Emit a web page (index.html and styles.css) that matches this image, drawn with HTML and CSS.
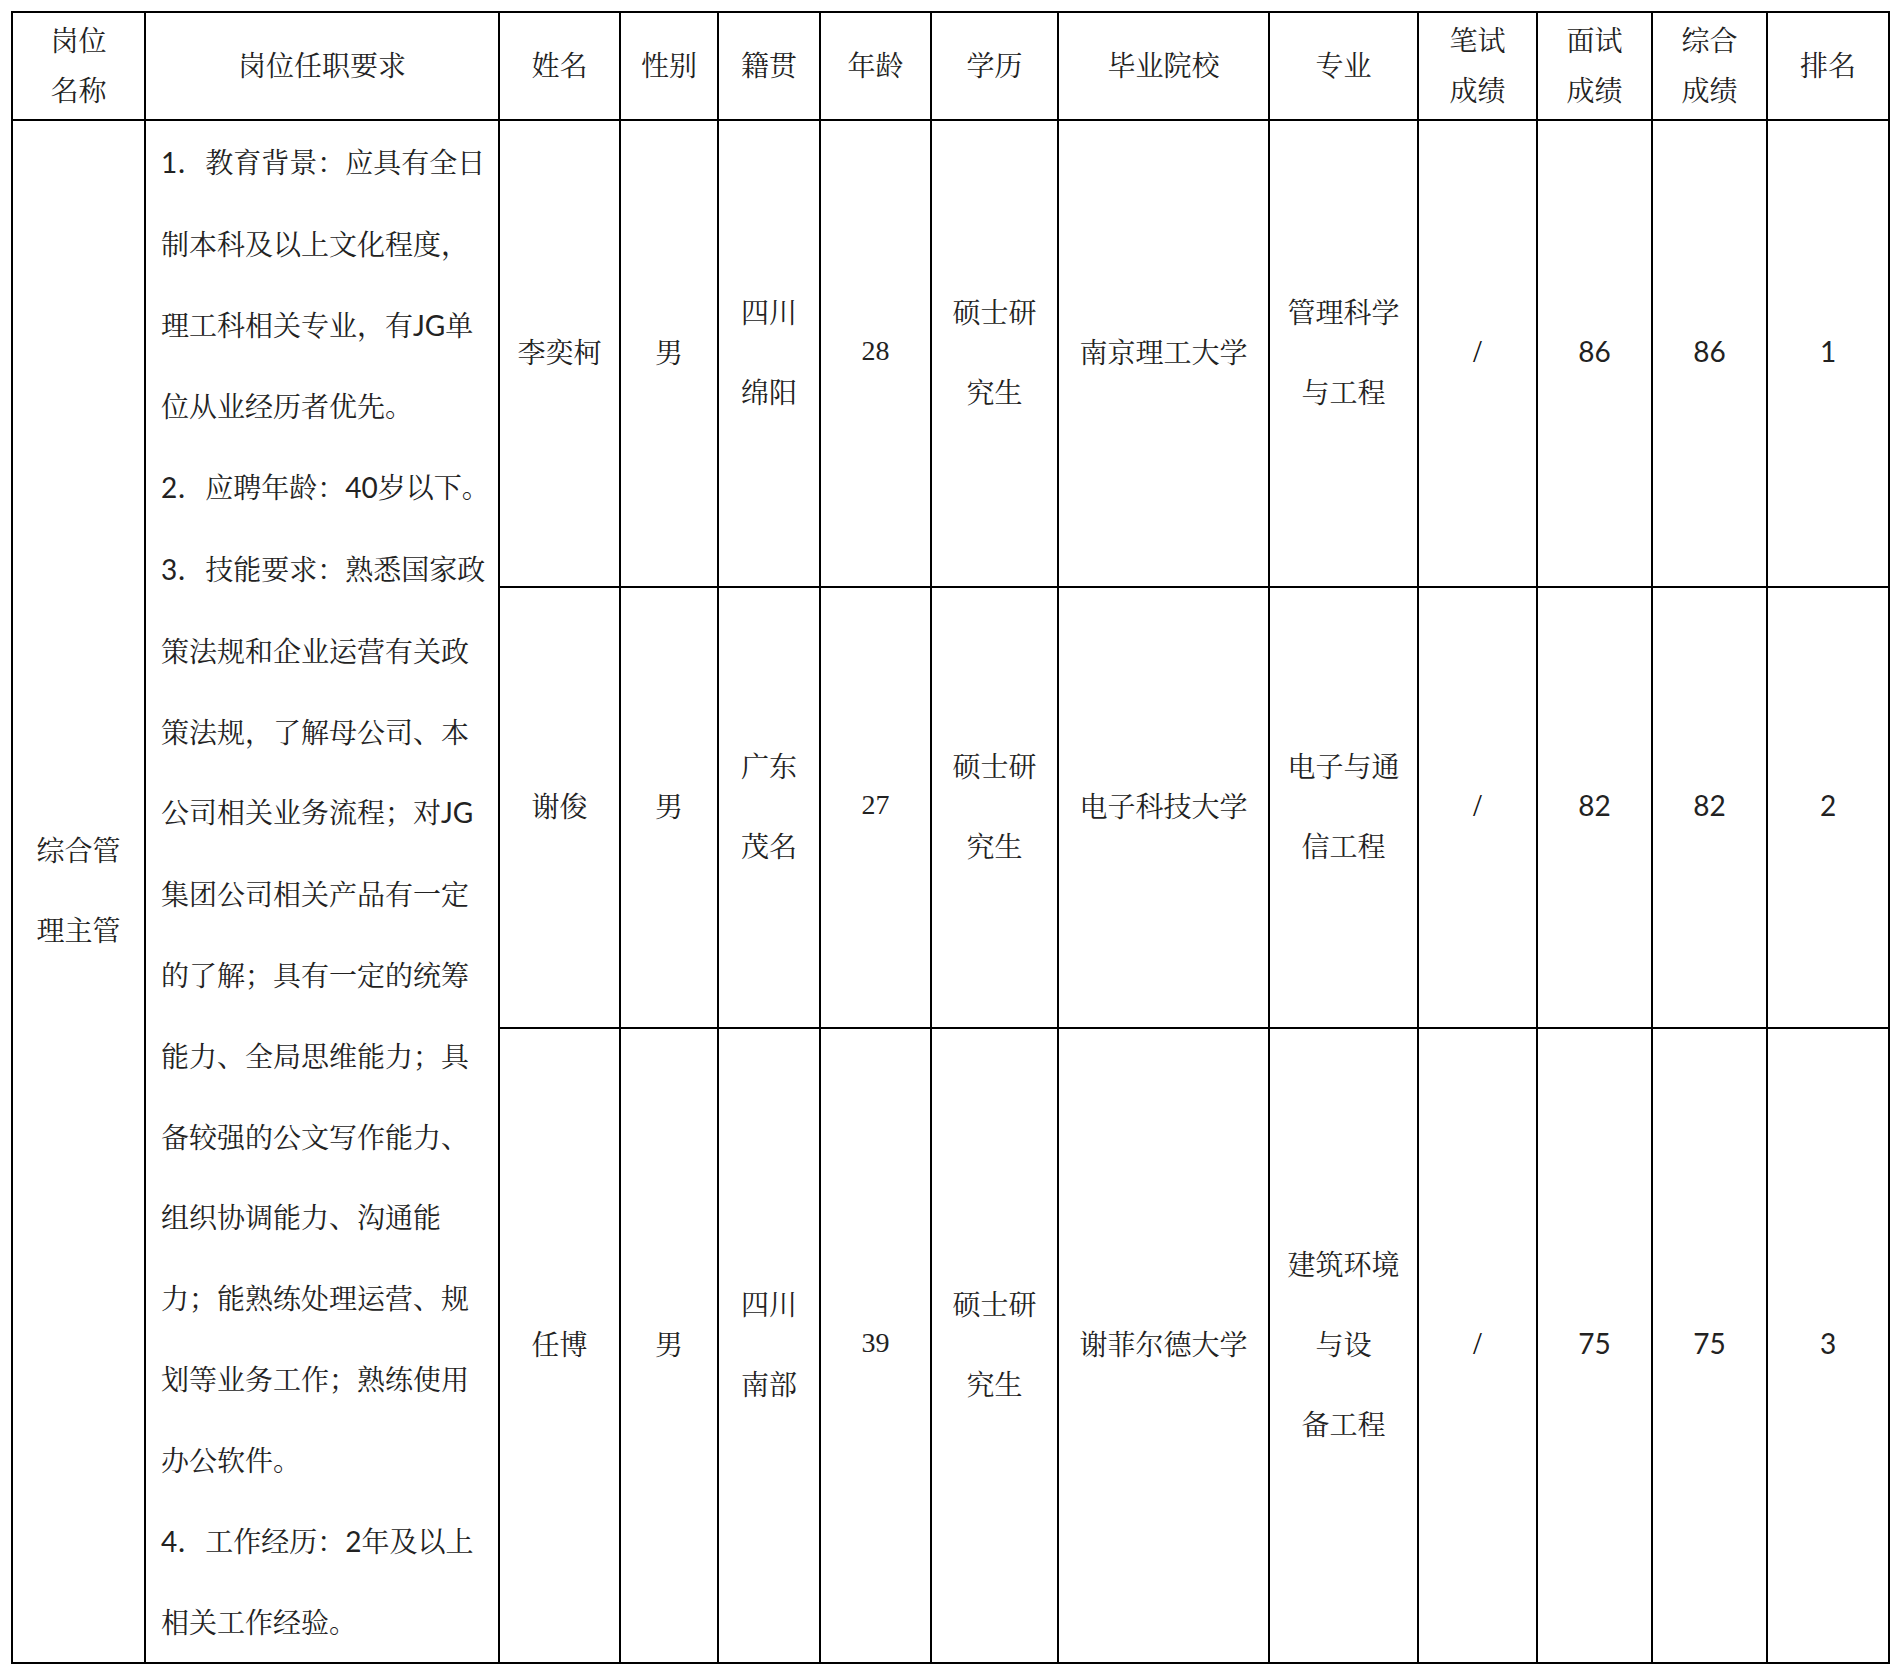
FILE: index.html
```html
<!DOCTYPE html>
<html lang="zh-CN">
<head>
<meta charset="utf-8">
<title>岗位任职要求</title>
<link rel="stylesheet" href="styles.css">
</head>
<body>
<table class="grid">
  <colgroup>
    <col class="c1"><col class="c2"><col class="c3"><col class="c4"><col class="c5"><col class="c6"><col class="c7"><col class="c8"><col class="c9"><col class="c10"><col class="c11"><col class="c12"><col class="c13">
  </colgroup>
  <thead>
    <tr class="head">
      <th>岗位<br>名称</th>
      <th>岗位任职要求</th>
      <th>姓名</th>
      <th>性别</th>
      <th>籍贯</th>
      <th>年龄</th>
      <th>学历</th>
      <th>毕业院校</th>
      <th>专业</th>
      <th>笔试<br>成绩</th>
      <th>面试<br>成绩</th>
      <th>综合<br>成绩</th>
      <th>排名</th>
    </tr>
  </thead>
  <tbody>
    <tr class="r1">
      <td rowspan="3">综合管<br>理主管</td>
      <td rowspan="3" class="req"><span class="lat">1</span>．教育背景：应具有全日<br>制本科及以上文化程度，<br>理工科相关专业，有<span class="lat">JG</span>单<br>位从业经历者优先。<br><span class="lat">2</span>．应聘年龄：<span class="lat">40</span>岁以下。<br><span class="lat">3</span>．技能要求：熟悉国家政<br>策法规和企业运营有关政<br>策法规，了解母公司、本<br>公司相关业务流程；对<span class="lat">JG</span><br>集团公司相关产品有一定<br>的了解；具有一定的统筹<br>能力、全局思维能力；具<br>备较强的公文写作能力、<br>组织协调能力、沟通能<br>力；能熟练处理运营、规<br>划等业务工作；熟练使用<br>办公软件。<br><span class="lat">4</span>．工作经历：<span class="lat">2</span>年及以上<br>相关工作经验。</td>
      <td>李奕柯</td>
      <td>男</td>
      <td>四川<br>绵阳</td>
      <td class="num-serif">28</td>
      <td>硕士研<br>究生</td>
      <td>南京理工大学</td>
      <td>管理科学<br>与工程</td>
      <td class="slash">/</td>
      <td class="num">86</td>
      <td class="num">86</td>
      <td class="num">1</td>
    </tr>
    <tr class="r2">
      <td>谢俊</td>
      <td>男</td>
      <td>广东<br>茂名</td>
      <td class="num-serif">27</td>
      <td>硕士研<br>究生</td>
      <td>电子科技大学</td>
      <td>电子与通<br>信工程</td>
      <td class="slash">/</td>
      <td class="num">82</td>
      <td class="num">82</td>
      <td class="num">2</td>
    </tr>
    <tr class="r3">
      <td>任博</td>
      <td>男</td>
      <td>四川<br>南部</td>
      <td class="num-serif">39</td>
      <td>硕士研<br>究生</td>
      <td>谢菲尔德大学</td>
      <td>建筑环境<br>与设<br>备工程</td>
      <td class="slash">/</td>
      <td class="num">75</td>
      <td class="num">75</td>
      <td class="num">3</td>
    </tr>
  </tbody>
</table>
</body>
</html>
```

FILE: styles.css
```css
html, body {
  margin: 0;
  padding: 0;
  background: #ffffff;
}

body {
  padding: 11px 0 0 11px;
  font-family: "Noto Serif CJK SC", "Noto Sans CJK SC", serif;
  color: #222222;
}

.grid {
  border-collapse: collapse;
  table-layout: fixed;
  width: 1879px;
  border: 2px solid #000000;
}

.c1 { width: 133px; }
.c2 { width: 354px; }
.c3 { width: 121px; }
.c4 { width: 98px; }
.c5 { width: 102px; }
.c6 { width: 111px; }
.c7 { width: 127px; }
.c8 { width: 211px; }
.c9 { width: 149px; }
.c10 { width: 119px; }
.c11 { width: 115px; }
.c12 { width: 115px; }
.c13 { width: 122px; }

.grid th,
.grid td {
  border: 2px solid #000000;
  padding: 0 0 5px 0;
  text-align: center;
  vertical-align: middle;
  font-size: 28px;
  font-weight: 400;
  white-space: nowrap;
}

.grid th {
  line-height: 50px;
  padding: 0 0 4px 0;
}

.grid td {
  line-height: 80px;
}

.head th { height: 102px; }
.r1 td { height: 457px; }
.r2 td { height: 431px; }
.r3 td { height: 624px; }

.grid td.req {
  text-align: left;
  vertical-align: top;
  padding: 0 0 0 15px;
  line-height: 80.8px;
}

.lat {
  font-family: "Lato", "Liberation Sans", sans-serif;
}

.num {
  font-family: "Lato", "Liberation Sans", sans-serif;
}

.num-serif {
  font-family: "Liberation Serif", serif;
}

.grid td.slash {
  font-family: "Liberation Serif", serif;
  font-size: 32px;
  color: #111111;
}
```
